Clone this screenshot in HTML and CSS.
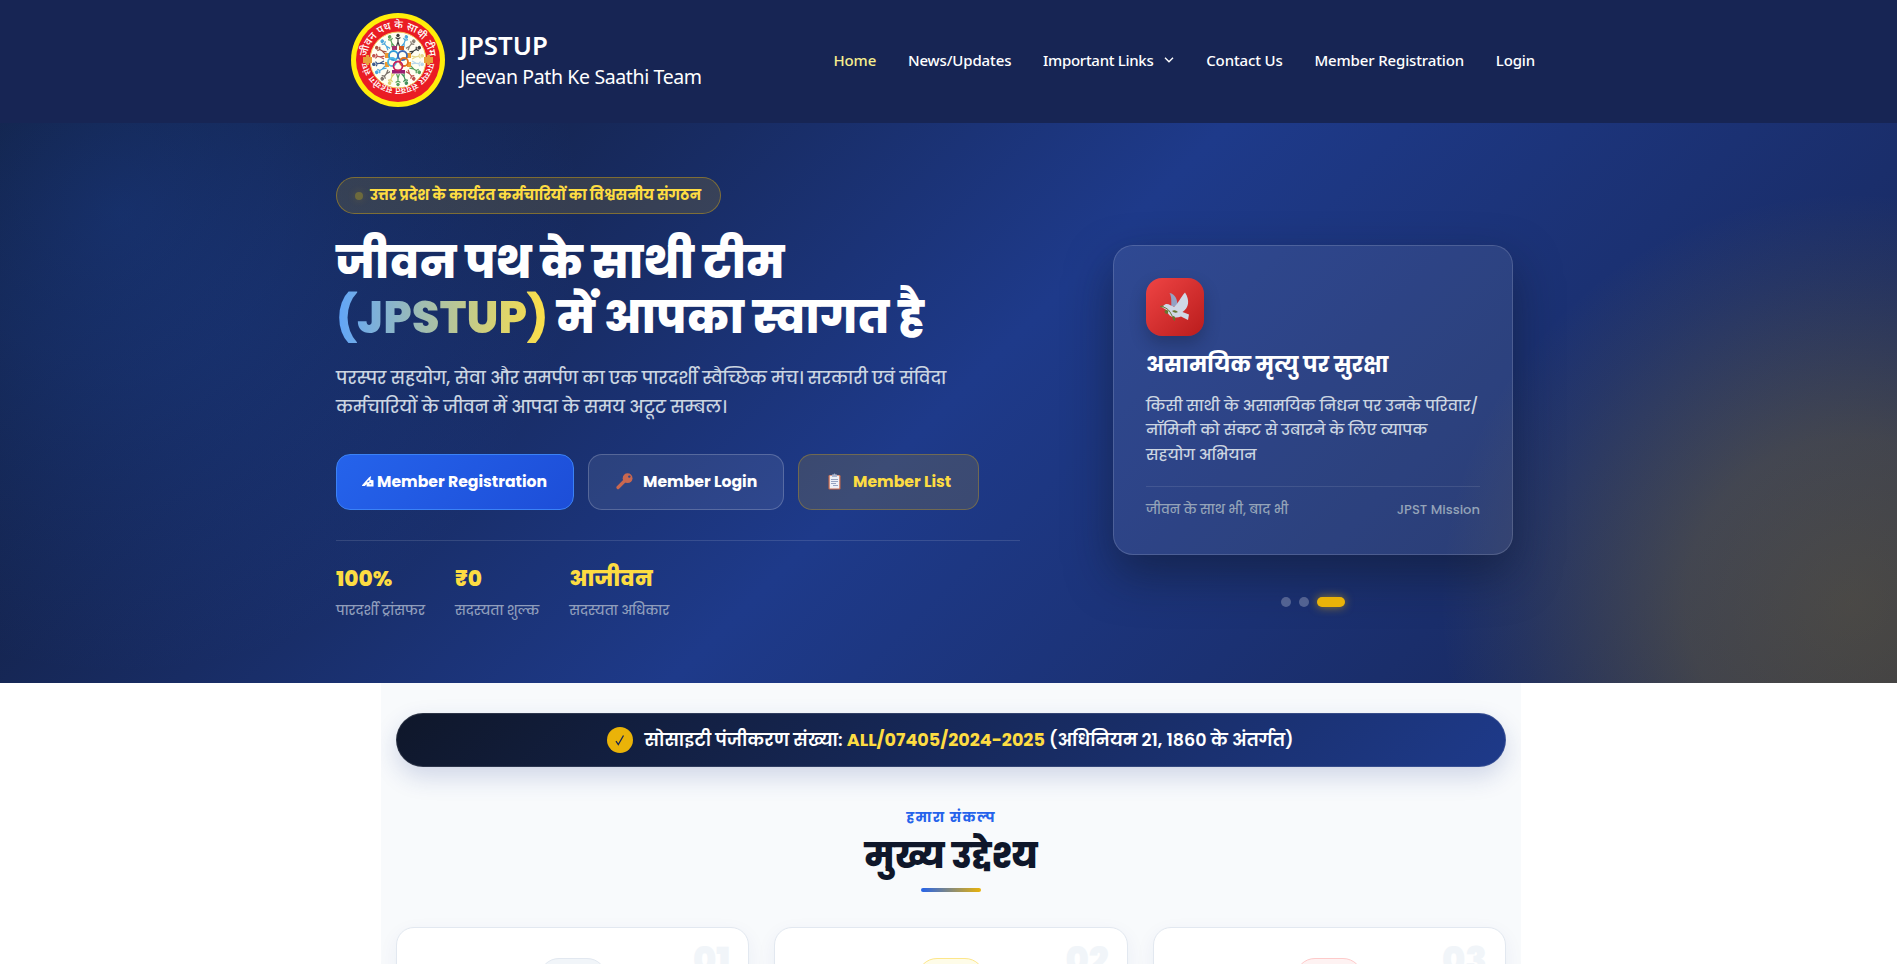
FILE: index.html
```html
<!DOCTYPE html>
<html lang="hi">
<head>
<meta charset="utf-8">
<title>JPSTUP</title>
<link rel="stylesheet" href="styles.css">
</head>
<body>
<header class="site-header">
  <div class="header-inner">
    <svg class="logo" viewBox="0 0 94 94">
      <defs>
        <path id="arc-top" d="M16.700 53A31 31 0 1 1 77.300 53"/>
        <path id="arc-bottom" d="M78 44A31 31 0 1 1 16 44"/>
        <g id="person"><circle cx="47" cy="22.500" r="1.300"/><path d="M44.600 24.500L47 26L49.400 24.500M47 25V29L45.600 33M47 29L48.400 33" fill="none" stroke-width="1.200"/></g>
      </defs>
      <circle cx="47" cy="47" r="47" fill="#ffee0a"/>
      <circle cx="47" cy="47" r="42" fill="#ea1c24"/>
      <circle cx="47" cy="47" r="28" fill="#fffef2" stroke="#f3c95b" stroke-width="1"/>
      <text class="logo-text"><textPath href="#arc-top" startOffset="50%" text-anchor="middle">जीवन पथ के साथी टीम</textPath></text>
      <text class="logo-text logo-text-small"><textPath href="#arc-bottom" startOffset="50%" text-anchor="middle">परस्पर संयुक्त सहयोग संघ</textPath></text>
      <g fill="#e8a13a"><path d="M12 44h3v-2h3v2h3v6h-3v2h-3v-2h-3zM73 44h3v-2h3v2h3v6h-3v2h-3v-2h-3z"/></g>
      <g>
        <use href="#person" fill="#3c3c3c" stroke="#3c3c3c"/>
        <use href="#person" fill="#49a6dc" stroke="#49a6dc" transform="rotate(20 47 47)"/>
        <use href="#person" fill="#8a8378" stroke="#8a8378" transform="rotate(40 47 47)"/>
        <use href="#person" fill="#3c3c3c" stroke="#3c3c3c" transform="rotate(60 47 47)"/>
        <use href="#person" fill="#e7d98a" stroke="#e7d98a" transform="rotate(80 47 47)"/>
        <use href="#person" fill="#b9d8ea" stroke="#b9d8ea" transform="rotate(100 47 47)"/>
        <use href="#person" fill="#57a05b" stroke="#57a05b" transform="rotate(120 47 47)"/>
        <use href="#person" fill="#c0504d" stroke="#c0504d" transform="rotate(140 47 47)"/>
        <use href="#person" fill="#3f8f58" stroke="#3f8f58" transform="rotate(160 47 47)"/>
        <use href="#person" fill="#57a05b" stroke="#57a05b" transform="rotate(180 47 47)"/>
        <use href="#person" fill="#dcd06b" stroke="#dcd06b" transform="rotate(200 47 47)"/>
        <use href="#person" fill="#7a726a" stroke="#7a726a" transform="rotate(220 47 47)"/>
        <use href="#person" fill="#49a6dc" stroke="#49a6dc" transform="rotate(240 47 47)"/>
        <use href="#person" fill="#3c5a8c" stroke="#3c5a8c" transform="rotate(260 47 47)"/>
        <use href="#person" fill="#c0504d" stroke="#c0504d" transform="rotate(280 47 47)"/>
        <use href="#person" fill="#a8543f" stroke="#a8543f" transform="rotate(300 47 47)"/>
        <use href="#person" fill="#49a6dc" stroke="#49a6dc" transform="rotate(320 47 47)"/>
        <use href="#person" fill="#57a05b" stroke="#57a05b" transform="rotate(340 47 47)"/>
      </g>
      <g fill="#ef9a2e">
        <rect x="41" y="33" width="5" height="4" fill="#a3306e"/><rect x="48" y="33" width="5" height="4" fill="#d4581e"/>
        <rect x="34" y="40" width="4" height="5"/><rect x="34" y="49" width="4" height="5"/>
        <rect x="56" y="40" width="4" height="5"/><rect x="56" y="49" width="4" height="5"/>
        <rect x="41" y="57" width="13" height="3.500" fill="#9b1f73"/>
      </g>
      <g fill="none" stroke-width="1.800">
        <circle cx="42.500" cy="42.500" r="4.500" stroke="#2f9bd8"/><circle cx="51.500" cy="42.500" r="4.500" stroke="#3f68b5"/>
        <circle cx="41" cy="49" r="4" stroke="#4fb9e6"/><circle cx="53" cy="49" r="4" stroke="#e2711d"/>
        <circle cx="47" cy="53" r="4.500" stroke="#c4205e"/>
      </g>
    </svg>
    <div class="brand"><div class="brand-name">JPSTUP</div><div class="brand-tag">Jeevan Path Ke Saathi Team</div></div>
    <nav class="nav">
      <a class="active">Home</a><a>News/Updates</a>
      <a class="has-menu"><span>Important Links</span><svg viewBox="0 0 10 6" width="10" height="6"><path d="M1 .8L5 4.800L9 .8" fill="none" stroke="#fff" stroke-width="1.400"/></svg></a>
      <a>Contact Us</a><a>Member Registration</a><a>Login</a>
    </nav>
  </div>
</header>

<section class="hero">
  <div class="hero-inner">
    <div class="hero-left">
      <div class="badge"><span class="badge-dot"></span>उत्तर प्रदेश के कार्यरत कर्मचारियों का विश्वसनीय संगठन</div>
      <h1>जीवन पथ के साथी टीम<br><span class="grad">(JPSTUP)</span> में आपका स्वागत है</h1>
      <p class="lead">परस्पर सहयोग, सेवा और समर्पण का एक पारदर्शी स्वैच्छिक मंच। सरकारी एवं संविदा<br>कर्मचारियों के जीवन में आपदा के समय अटूट सम्बल।</p>
      <div class="actions">
        <a class="btn primary"><svg class="ico-write" viewBox="0 0 13 12"><path d="M0 10L7.500 1.500L10 0L9 4L12.500 4.500V11.500H5V9L3 11H0z" fill="#fff"/><path d="M6 6.500L8 5M8 8.500H10" stroke="#2360e8" stroke-width="1.200" fill="none"/></svg>Member Registration</a>
        <a class="btn ghost"><svg class="ico-key" viewBox="0 0 17 17"><path d="M2 14.500L9 7.500" stroke="#c9674f" stroke-width="3.200" stroke-linecap="round"/><circle cx="11.600" cy="5.200" r="4.900" fill="#c9674f"/><circle cx="13.300" cy="3.600" r="1.200" fill="#2f468a"/></svg>Member Login</a>
        <a class="btn gold"><svg class="ico-clip" viewBox="0 0 13 17"><rect x=".5" y="2" width="12" height="14.500" rx="1.200" fill="#c8684b"/><rect x="1.700" y="2.600" width="9.600" height="12.900" fill="#edf0f7"/><path d="M4 1.500H5.500Q6.500 -.5 7.500 1.500H9V4H4z" fill="#aab4cc"/><path d="M3 6.500H10M3 8.500H10M3 10.500H8M5 12.500H10" stroke="#8c9abb" stroke-width=".9"/></svg>Member List</a>
      </div>
      <div class="stats">
        <div><b>100%</b><span>पारदर्शी ट्रांसफर</span></div>
        <div><b>₹0</b><span>सदस्यता शुल्क</span></div>
        <div><b>आजीवन</b><span>सदस्यता अधिकार</span></div>
      </div>
    </div>
    <div class="hero-right">
      <article class="card">
        <div class="card-icon"><svg viewBox="0 0 30 30" width="30" height="30">
          <path d="M9.500 1C15 2 17.500 7 17.500 14L11.500 15C11 10 12 5 9.500 1z" fill="#94a3c4"/>
          <path d="M1.500 15L5 12.500C8 11 11 14 14 15C18 12 20 6 25 .5C30 8 29 16 22.500 20L29 22.500L28 28L21 24.500C15 27 8 25 6.500 18z" fill="#cfd8e6"/>
          <path d="M0 14.500Q7 15 10 20T14 28" fill="none" stroke="#6b7a35" stroke-width="1"/>
          <path d="M4.500 19q2-2 4 0l-1 3q-3 0-3-3zM12 19q3-2 6 1q-3 2-6-1zM13 24q3 0 2 5q-3-1-2-5zM0 14l3-.5 1 1.500z" fill="#66752f"/></svg></div>
        <h3>असामयिक मृत्यु पर सुरक्षा</h3>
        <p>किसी साथी के असामयिक निधन पर उनके परिवार/<br>नॉमिनी को संकट से उबारने के लिए व्यापक<br>सहयोग अभियान</p>
        <footer><span>जीवन के साथ भी, बाद भी</span><span>JPST Mission</span></footer>
      </article>
      <div class="dots"><i></i><i></i><i class="on"></i></div>
    </div>
  </div>
</section>

<main class="content">
  <div class="reg"><span class="reg-check"><svg viewBox="0 0 12 12" width="12" height="12"><path d="M2 7.200L4.300 10.500L9.500 1.500" fill="none" stroke="#172554" stroke-width="1.300"/></svg></span><span>सोसाइटी पंजीकरण संख्या: <strong>ALL/07405/2024-2025</strong> (अधिनियम 21, 1860 के अंतर्गत)</span></div>
  <div class="eyebrow">हमारा संकल्प</div>
  <h2>मुख्य उद्देश्य</h2>
  <div class="rule"></div>
  <div class="goals">
    <div class="goal"><span class="num">01</span><div class="goal-icon slate"></div></div>
    <div class="goal"><span class="num">02</span><div class="goal-icon yellow"></div></div>
    <div class="goal"><span class="num">03</span><div class="goal-icon red"></div></div>
  </div>
</main>
</body>
</html>
```
FILE: styles.css
```css
*{box-sizing:border-box}
body{margin:0;height:964px;overflow:hidden;background:#fff;font-family:Poppins,"Noto Sans",sans-serif}
h1,h2,h3,p{margin:0}

.site-header{height:123px;background:#172554;color:#fff;font-family:"Noto Sans",sans-serif}
.header-inner{width:1225px;margin:0 auto;height:100%;padding:13px 26px 0 15px;display:flex;align-items:flex-start}
.logo{width:94px;height:94px;flex:none}
.logo-text{font:500 10.800px "Noto Sans",sans-serif;fill:#fff}
.logo-text-small{font-size:9px}
.brand{margin:15px 0 0 15px;white-space:nowrap}
.brand-name{font-weight:600;font-size:25.800px;line-height:35px}
.brand-tag{font-size:19.500px;line-height:28px;letter-spacing:-.37px}
.nav{margin:33px 0 0 auto;display:flex;gap:31.800px;font-size:15px;font-weight:500;line-height:28px;letter-spacing:-.14px;white-space:nowrap}
.nav .active{color:#f5ee8e}
.has-menu{display:flex;align-items:center;gap:11px}
.has-menu span{letter-spacing:-.3px}

.hero{height:560px;background:
  radial-gradient(circle 410px at 1850px 480px,rgba(234,179,8,.24),rgba(234,179,8,.2) 40%,rgba(234,179,8,.06) 80%,rgba(234,179,8,0)),
  radial-gradient(circle 460px at 120px 90px,rgba(37,99,235,.27),rgba(37,99,235,.2) 35%,rgba(37,99,235,0)),
  linear-gradient(135deg,#0f172a 0%,#1e3a8a 50%,#172554 100%);color:#fff;overflow:hidden}
.hero-inner{width:1225px;margin:0 auto;display:grid;grid-template-columns:684px 496px;gap:45px}
.hero-left{padding-top:54px}
.badge{display:inline-flex;align-items:center;gap:7px;height:37px;width:385px;padding:0 18px;border:1px solid rgba(234,179,8,.4);border-radius:19px;background:rgba(234,179,8,.15);color:#fddc42;font-size:14.080px;font-weight:700;white-space:nowrap}
.badge-dot{width:8px;height:8px;border-radius:50%;background:#6d6a3c;box-shadow:0 0 8px rgba(234,179,8,.2);flex:none}
h1{margin-top:21px;font-size:44.800px;font-weight:800;line-height:55px;white-space:nowrap}
.grad{background:linear-gradient(90deg,#60a5fa,#fde047);-webkit-background-clip:text;background-clip:text;color:transparent}
.lead{margin-top:19px;font-size:17.280px;font-weight:500;line-height:29px;color:#cbd5e1;white-space:nowrap}
.actions{margin-top:32px;display:flex;gap:14px}
.btn{height:56px;padding-bottom:1px;border-radius:14px;border:1px solid;display:flex;align-items:center;font-size:15.680px;font-weight:700;white-space:nowrap}
.primary{width:238px;padding-left:25px;gap:3px;border-color:#3b82f6;background:linear-gradient(135deg,#2563eb,#1d4ed8)}
.ghost{width:196px;padding-left:27px;gap:10px;border-color:rgba(255,255,255,.2);background:rgba(255,255,255,.08)}
.gold{width:181px;padding-left:29px;gap:12px;border-color:rgba(234,179,8,.3);background:rgba(234,179,8,.15);color:#fddc42}
.ico-write{width:12px;height:11px}
.ico-key{width:17px;height:17px}
.ico-clip{width:13px;height:17px}
.stats{margin-top:30px;border-top:1px solid rgba(255,255,255,.12);padding-top:21px;display:flex;gap:30px;white-space:nowrap}
.stats div{display:flex;flex-direction:column}
.stats b{font-size:21.600px;font-weight:800;line-height:34px;color:#fddc42}
.stats span{font-size:13.120px;font-weight:500;line-height:20px;margin-top:5px;color:#8f9dbb}

.hero-right{padding-top:122px;display:flex;flex-direction:column;align-items:center}
.card{width:400px;height:310px;padding:32px;border:1px solid rgba(255,255,255,.15);border-radius:20px;background:rgba(255,255,255,.08);box-shadow:0 20px 45px rgba(15,23,42,.5)}
.card-icon{width:58px;height:58px;border-radius:16px;background:linear-gradient(135deg,#ef4444,#b91c1c);display:flex;align-items:center;justify-content:center;box-shadow:0 8px 16px rgba(15,23,42,.3)}
.card h3{margin-top:12px;font-size:21.600px;font-weight:700;line-height:34px;white-space:nowrap}
.card p{margin-top:12px;font-size:15.200px;font-weight:500;line-height:24.300px;color:#cbd5e1;white-space:nowrap}
.card footer{margin-top:19.600px;border-top:1px solid rgba(255,255,255,.1);padding-top:13px;display:flex;justify-content:space-between;font-size:13.120px;font-weight:500;line-height:20px;color:#94a3b8}
.dots{margin-top:42px;display:flex;gap:8px}
.dots i{width:10px;height:10px;border-radius:5px;background:rgba(255,255,255,.25)}
.dots .on{width:28px;background:#eab308;box-shadow:0 0 10px rgba(234,179,8,.6)}

.content{width:1140px;height:281px;margin-left:381px;padding:30px 15px 0;background:#f8fafc;display:flex;flex-direction:column;align-items:center;overflow:hidden}
.reg{width:100%;height:54px;flex:none;padding-right:2px;border-radius:27px;border:1px solid rgba(255,255,255,.12);background:linear-gradient(135deg,#0f172a,#1e3a8a) border-box;box-shadow:0 10px 25px rgba(30,58,138,.18);display:flex;align-items:center;justify-content:center;gap:12px;color:#fff;font-size:17.500px;font-weight:600;white-space:nowrap}
.reg strong{color:#fddc42;font-size:17.600px;font-weight:700}
.reg-check{width:26px;height:26px;border-radius:50%;background:#eab308;display:flex;align-items:center;justify-content:center}
.eyebrow{margin-top:41px;font-size:13.600px;font-weight:700;letter-spacing:1.360px;line-height:20px;color:#2563eb}
h2{margin-top:3px;font-size:35.200px;font-weight:800;line-height:50px;color:#0f172a}
.rule{width:60px;height:4px;flex:none;margin-top:7px;border-radius:2px;background:linear-gradient(90deg,#2563eb,#eab308)}
.goals{margin-top:35px;width:100%;display:grid;grid-template-columns:repeat(3,1fr);gap:25px}
.goal{position:relative;height:200px;padding-top:30px;border:1px solid #e2e8f0;border-radius:18px;background:#fff;box-shadow:0 6px 20px rgba(30,58,138,.06)}
.num{position:absolute;right:18px;top:14px;font-size:35.200px;font-weight:900;line-height:36px;color:#f1f5f9}
.goal-icon{width:68px;height:68px;margin:0 auto;border-radius:20px;border:1px solid}
.slate{background:#f1f5f9;border-color:#e2e8f0}
.yellow{background:#fefce8;border-color:#fde68a}
.red{background:#fef2f2;border-color:#fecaca}
```
